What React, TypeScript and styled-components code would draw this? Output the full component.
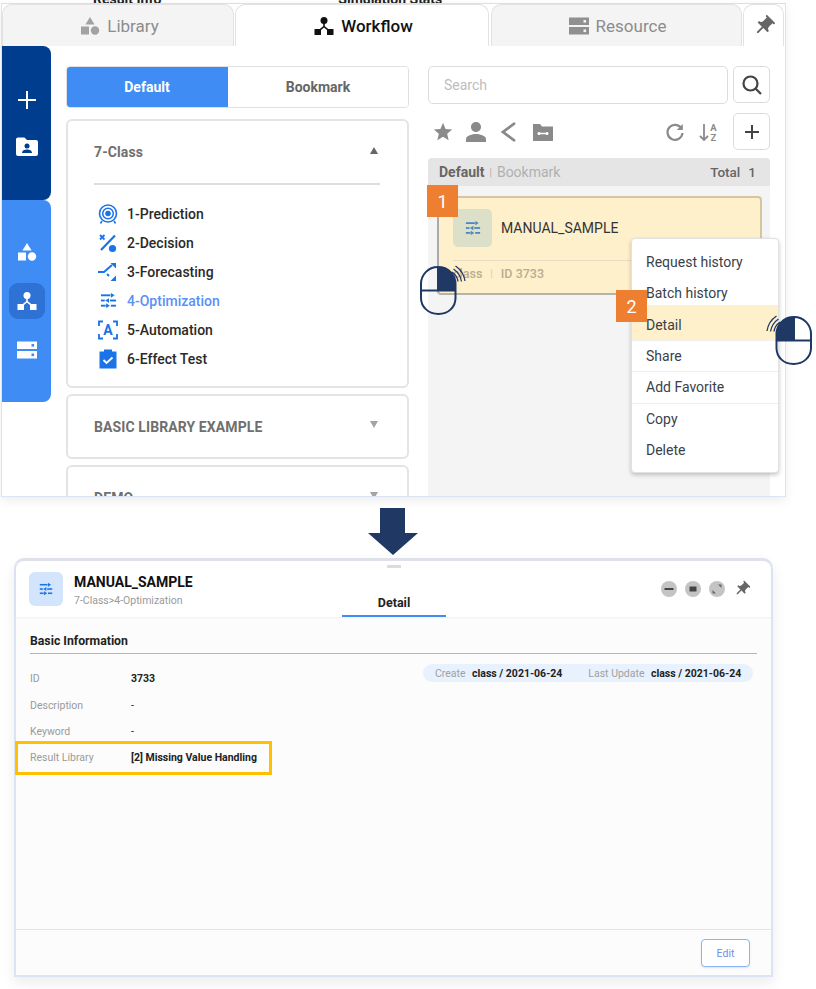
/*
  Workflow list and detail panel guide.
*/

import React from 'react'
import styled, { createGlobalStyle } from 'styled-components'

const GlobalStyle = createGlobalStyle`
  html, body {
    margin: 0;
    padding: 0;
    background: #fff;
    font-family: Roboto, "Liberation Sans", sans-serif;
  }
  * { box-sizing: border-box; }
`

const BLUE = '#3f8cf5'
const NAVY = '#1f3864'
const ICON_BLUE = '#1a73e8'
const GRAY = '#8a8a8a'

/* ---------- icons ---------- */

type IconProps = { size?: number; color?: string }

const PinIcon = ({ size = 24, color = '#555' }: IconProps) => (
  <svg width={size} height={size} viewBox="0 0 24 24" fill={color} style={{ transform: 'rotate(45deg)' }}>
    <path d="M16 9V4h1c.55 0 1-.45 1-1s-.45-1-1-1H7c-.55 0-1 .45-1 1s.45 1 1 1h1v5c0 1.66-1.34 3-3 3v2h5.97v7l1 1 1-1v-7H19v-2c-1.66 0-3-1.34-3-3z" />
  </svg>
)

const ShapesIcon = ({ size = 20, color = '#fff' }: IconProps) => (
  <svg width={size} height={size} viewBox="0 0 20 20" fill={color}>
    <path d="M10 1l4.6 7.4H5.4z" />
    <rect x="1" y="10.5" width="8" height="8" />
    <circle cx="15" cy="14.5" r="4.2" />
  </svg>
)

const FlowIcon = ({ size = 20, color = '#fff' }: IconProps) => (
  <svg width={size} height={size} viewBox="0 0 20 20" fill={color}>
    <circle cx="10" cy="4.5" r="3.5" />
    <path d="M9.2 6h1.6v4.2l5 4-1 1.2-4.800-3.900-4.800 3.900-1-1.200 5-4z" />
    <rect x="0.5" y="13" width="6.5" height="6" />
    <rect x="13" y="13" width="6.5" height="6" />
  </svg>
)

const ServerIcon = ({ size = 20, color = '#fff', hole = BLUE }: IconProps & { hole?: string }) => (
  <svg width={size} height={size} viewBox="0 0 20 20" fill={color}>
    <rect x="0" y="1.5" width="20" height="7.5" />
    <rect x="0" y="11" width="20" height="7.5" />
    <rect x="14.5" y="4" width="2.6" height="2.6" fill={hole} />
    <rect x="14.5" y="13.5" width="2.6" height="2.6" fill={hole} />
  </svg>
)

const TuneIcon = ({ size = 18, color = ICON_BLUE }: IconProps) => (
  <svg width={size} height={size} viewBox="0 0 18 18" fill={color}>
    <rect x="1" y="2.5" width="10" height="2" />
    <path d="M11.5 1v5l4-2.5z" />
    <rect x="1" y="8" width="4" height="2" />
    <path d="M9.5 6.500v5l-4-2.500z" />
    <rect x="10.5" y="8" width="6.5" height="2" />
    <rect x="1" y="13.5" width="5" height="2" />
    <path d="M6.5 12v5l4-2.500z" />
    <rect x="11.5" y="13.5" width="5.5" height="2" />
  </svg>
)

const TargetIcon = () => (
  <svg width="20" height="20" viewBox="0 0 20 20" fill="none" stroke={ICON_BLUE}>
    <circle cx="10" cy="9.5" r="8.5" strokeWidth="1.6" />
    <circle cx="10" cy="9.5" r="5.3" strokeWidth="1.5" />
    <circle cx="10" cy="9.5" r="2.4" fill={ICON_BLUE} />
    <path d="M4 17l-1.500 2.500M16 17l1.500 2.500" strokeWidth="1.5" />
  </svg>
)

const DecisionIcon = () => (
  <svg width="20" height="20" viewBox="0 0 20 20" fill={ICON_BLUE}>
    <path d="M2 2l4.500 4.500M6.500 2L2 6.500" stroke={ICON_BLUE} strokeWidth="1.8" />
    <path d="M17 2.500L3 17" stroke={ICON_BLUE} strokeWidth="2.2" />
    <circle cx="14.5" cy="15.5" r="3.6" />
  </svg>
)

const ForecastIcon = () => (
  <svg width="20" height="20" viewBox="0 0 20 20" fill="none" stroke={ICON_BLUE} strokeWidth="2">
    <path d="M0 10h6l8-7" />
    <path d="M12.5 1H18v5.500z" fill={ICON_BLUE} stroke="none" />
    <path d="M9 12l2 2" />
    <path d="M12.5 19H18v-5.500z" fill={ICON_BLUE} stroke="none" />
  </svg>
)

const AutomationIcon = () => (
  <svg width="20" height="20" viewBox="0 0 20 20" fill="none" stroke={ICON_BLUE} strokeWidth="1.8">
    <path d="M1 6V1.500h4M15 1.500h4V6M1 14v4.500h4M15 18.500h4V14" />
    <text x="10" y="15" textAnchor="middle" fontFamily="Roboto, sans-serif" fontSize="14" fontWeight="700" fill={ICON_BLUE} stroke="none">
      A
    </text>
  </svg>
)

const ClipboardIcon = () => (
  <svg width="20" height="20" viewBox="0 0 20 20">
    <path d="M1.500 2.500h4.500V0.500h8v2h4.500V19.500h-17z" fill={ICON_BLUE} />
    <path d="M5.500 11l3 3 6-5.500" fill="none" stroke="#fff" strokeWidth="1.9" />
  </svg>
)

const MouseIcon = ({ side }: { side: 'left' | 'right' }) => (
  <svg width="46" height="52" viewBox="0 0 46 52" fill="none" style={side === 'left' ? { transform: 'scaleX(-1)' } : undefined}>
    <path d="M10.500 21c0-9 7-17 17.500-17 10 0 17 8 17 17v14c0 9-7.500 16-17.500 16s-17-7-17-16z" stroke={NAVY} strokeWidth="2" fill="none" />
    <path d="M10.500 21c0-9 7-17 17.500-17v23H10.500z" fill={NAVY} />
    <path d="M10.500 27.500h34.500M28 4v23.500" stroke={NAVY} strokeWidth="2" />
    <path d="M1 18C2 11 6 6 10.500 3" stroke={NAVY} strokeWidth="1.3" />
    <path d="M4.500 18.500C5.500 13 8 9 12.500 6" stroke={NAVY} strokeWidth="1.3" />
    <path d="M8 18.500C8.500 15 10.500 11.500 14 9" stroke={NAVY} strokeWidth="1.3" />
  </svg>
)

/* ---------- page ---------- */

const Page = styled.div`
  width: 816px;
  height: 989px;
  overflow: hidden;
  background: #fff;
  display: flex;
  flex-direction: column;
`

const TopStrip = styled.div`
  height: 3px;
  overflow: hidden;
  display: flex;
  align-items: flex-end;
  font-size: 14px;
  font-weight: 700;
  color: #222;
  line-height: 14px;
  white-space: nowrap;
`

const StripText = styled.span<{ $left: number }>`
  margin-left: ${(p) => p.$left}px;
  transform: translateY(3px);
`

const ListWindow = styled.div`
  margin-left: 1px;
  width: 785px;
  height: 494px;
  flex: none;
  border: 1px solid #dbe3f5;
  border-top-color: #d5def3;
  background: #fff;
  box-shadow: 0 4px 10px rgba(0, 0, 0, 0.07);
  overflow: hidden;
  position: relative;
`

const TabBar = styled.div`
  display: flex;
  height: 42px;
`

const Tab = styled.div<{ $active?: boolean; $w: number; $mr?: number; $pl?: number }>`
  width: ${(p) => p.$w}px;
  margin-right: ${(p) => p.$mr ?? 0}px;
  padding-left: ${(p) => p.$pl ?? 0}px;
  background: ${(p) => (p.$active ? '#fff' : '#f4f4f4')};
  border: 1px solid #e2e2e2;
  border-bottom: 0;
  border-radius: 10px 10px 0 0;
  display: flex;
  align-items: center;
  justify-content: center;
  gap: 7px;
  font-size: 17px;
  font-weight: ${(p) => (p.$active ? 500 : 400)};
  color: ${(p) => (p.$active ? '#111' : '#8c8c8c')};
`

const ListBody = styled.div`
  display: flex;
  height: 450px;
`

const Sidebar = styled.div`
  width: 49px;
  flex: none;
  display: flex;
  flex-direction: column;
`

const SideGroup = styled.div<{ $h: number; $dark?: boolean; $pt: number; $gap: number }>`
  height: ${(p) => p.$h}px;
  padding-top: ${(p) => p.$pt}px;
  background: ${(p) => (p.$dark ? '#003d8f' : BLUE)};
  border-radius: 0 8px 8px 0;
  display: flex;
  flex-direction: column;
  align-items: center;
  gap: ${(p) => p.$gap}px;
`

const SideButton = styled.div<{ $active?: boolean }>`
  width: 36px;
  height: 36px;
  border-radius: 9px;
  display: flex;
  align-items: center;
  justify-content: center;
  background: ${(p) => (p.$active ? '#2f72d6' : 'transparent')};
  & + & {
    margin-top: 13px;
  }
`

const LeftColumn = styled.div`
  width: 343px;
  margin-left: 15px;
  padding-top: 20px;
  flex: none;
  display: flex;
  flex-direction: column;
`

const Toggle = styled.div`
  height: 42px;
  display: flex;
  border: 1px solid #e0e0e0;
  border-radius: 4px;
  overflow: hidden;
  margin-bottom: 11px;
  flex: none;
`

const ToggleItem = styled.div<{ $active?: boolean }>`
  flex: ${(p) => (p.$active ? '0 0 162px' : '1')};
  margin: ${(p) => (p.$active ? '-1px 0 -1px -1px' : '0')};
  background: ${(p) => (p.$active ? BLUE : '#fff')};
  color: ${(p) => (p.$active ? '#fff' : '#666')};
  font-size: 14px;
  font-weight: 700;
  display: flex;
  align-items: center;
  justify-content: center;
`

const Accordion = styled.div<{ $h: number }>`
  height: ${(p) => p.$h}px;
  flex: none;
  border: 2px solid #e4e4e4;
  border-radius: 6px;
  margin-bottom: 6px;
  padding: 0 27px 0 26px;
`

const AccordionHead = styled.div<{ $h: number; $line?: boolean }>`
  height: ${(p) => p.$h}px;
  display: flex;
  align-items: center;
  justify-content: space-between;
  font-size: 14px;
  font-weight: 700;
  letter-spacing: 0.1px;
  color: #6f6f6f;
  border-bottom: ${(p) => (p.$line ? '2px solid #dedede' : '0')};
  padding-right: 2px;
`

const Caret = styled.span<{ $up?: boolean }>`
  width: 0;
  height: 0;
  border-left: 4.5px solid transparent;
  border-right: 4.5px solid transparent;
  ${(p) => (p.$up ? 'border-bottom: 7px solid #666;' : 'border-top: 7px solid #a4a4a4;')}
  transform: translateY(-2px);
`

const ClassList = styled.ul`
  list-style: none;
  margin: 14px 0 0;
  padding: 0 0 0 4px;
`

const ClassItem = styled.li<{ $active?: boolean }>`
  height: 29px;
  display: flex;
  align-items: center;
  gap: 9px;
  font-size: 14px;
  font-weight: 500;
  color: ${(p) => (p.$active ? '#5a90f7' : '#2a2a2a')};
`

const IconSlot = styled.span`
  width: 20px;
  height: 20px;
  flex: none;
  display: flex;
  align-items: center;
  justify-content: center;
`

const RightColumn = styled.div`
  width: 342px;
  margin-left: 19px;
  padding-top: 20px;
  flex: none;
  display: flex;
  flex-direction: column;
  position: relative;
`

const SearchRow = styled.div`
  display: flex;
  gap: 5px;
  height: 38px;
  flex: none;
`

const SearchBox = styled.div`
  width: 300px;
  border: 1px solid #dcdcdc;
  border-radius: 5px;
  padding-left: 15px;
  display: flex;
  align-items: center;
  font-size: 14px;
  color: #bdbdbd;
`

const SquareButton = styled.div`
  width: 37px;
  height: 37px;
  border: 1px solid #dcdcdc;
  border-radius: 5px;
  display: flex;
  align-items: center;
  justify-content: center;
  color: #444;
`

const ToolRow = styled.div`
  height: 37px;
  margin: 9px 0 8px;
  display: flex;
  align-items: center;
  padding-left: 4px;
  flex: none;
`

const ToolIcon = styled.span<{ $gap?: number }>`
  display: flex;
  margin-right: ${(p) => p.$gap ?? 9}px;
`

const ToolSpacer = styled.div`
  flex: 1;
`

const ListPanel = styled.div`
  flex: 1;
  background: #f4f4f4;
  border-radius: 4px 4px 0 0;
`

const ListHead = styled.div`
  height: 28px;
  background: #e5e5e5;
  border-radius: 4px 4px 0 0;
  padding: 0 14px 0 11px;
  display: flex;
  align-items: center;
  font-size: 14px;
  color: #b0b0b0;
`

const HeadBold = styled.b`
  color: #666;
  font-weight: 700;
`

const HeadSep = styled.span`
  margin: 0 5px;
  font-size: 10px;
`

const HeadTotal = styled.span`
  margin-left: auto;
  color: #666;
  font-size: 13.5px;
  font-weight: 500;
  display: flex;
  gap: 8px;
`

const WorkCard = styled.div`
  margin: 10px 8px 0 9px;
  height: 99px;
  background: #fff0cc;
  border: 2px solid #d5c69f;
  border-left-color: #aaa;
  border-bottom-color: #b5b3aa;
  border-radius: 4px;
  padding: 11px 14px 0 14px;
`

const CardTop = styled.div`
  height: 52px;
  display: flex;
  gap: 9px;
  align-items: flex-start;
  border-bottom: 1px solid #e6dcc0;
`

const CardIcon = styled.div`
  width: 39px;
  height: 38px;
  border-radius: 5px;
  background: #dce0c8;
  display: flex;
  align-items: center;
  justify-content: center;
`

const CardTitle = styled.div`
  font-size: 14px;
  color: #333;
  line-height: 38px;
`

const CardMeta = styled.div`
  display: flex;
  align-items: center;
  height: 24px;
  font-size: 12.5px;
  font-weight: 500;
  color: #b8ad8e;
`

const MetaSep = styled.span`
  margin: 0 8px;
  font-size: 10px;
  color: #dccfae;
`

const Badge = styled.div<{ $x: number; $y: number }>`
  position: absolute;
  left: ${(p) => p.$x}px;
  top: ${(p) => p.$y}px;
  width: 31px;
  height: 32px;
  background: #ee7f31;
  color: #fff;
  font-size: 18px;
  display: flex;
  align-items: center;
  justify-content: center;
  z-index: 5;
`

const MouseMark = styled.div<{ $x: number; $y: number }>`
  position: absolute;
  left: ${(p) => p.$x}px;
  top: ${(p) => p.$y}px;
  display: flex;
  z-index: 6;
`

const ContextMenu = styled.div`
  position: absolute;
  left: 629px;
  top: 234px;
  width: 148px;
  height: 235px;
  background: #fff;
  border: 1px solid #e2e2e2;
  border-radius: 4px;
  box-shadow: 0 2px 4px rgba(0, 0, 0, 0.22);
  padding-top: 7px;
  z-index: 4;
`

const MenuItem = styled.div<{ $active?: boolean; $line?: boolean }>`
  height: ${(p) => (p.$active ? 36 : 31.3)}px;
  margin-top: ${(p) => (p.$active ? -3.7 : 0)}px;
  padding: ${(p) => (p.$active ? '4.5px' : '0')} 0 0 14px;
  display: flex;
  align-items: center;
  font-size: 14px;
  color: #3a3f4a;
  background: ${(p) => (p.$active ? '#fff0cc' : 'transparent')};
  border-bottom: ${(p) => (p.$line ? '1px solid #eeeeee' : '0')};
`

const ArrowWrap = styled.div`
  height: 61px;
  padding-top: 11px;
  padding-left: 368px;
  flex: none;
  display: flex;
  align-items: flex-start;
`

/* ---------- detail window ---------- */

const DetailWindow = styled.div`
  margin-left: 14px;
  width: 759px;
  height: 419px;
  flex: none;
  border: 2px solid #dbe3f5;
  border-top: 3px solid #dfe1ea;
  border-radius: 10px 10px 0 0;
  background: #fcfcfc;
  box-shadow: 0 6px 14px rgba(0, 0, 0, 0.08);
  display: flex;
  flex-direction: column;
  position: relative;
`

const DetailHead = styled.div`
  height: 56px;
  flex: none;
  background: #fff;
  border-radius: 9px 9px 0 0;
  box-shadow: 0 1px 2px rgba(0, 0, 0, 0.05);
  display: grid;
  grid-template-columns: 313px 104px 1fr;
  padding-left: 13px;
  position: relative;
`

const Handle = styled.div`
  position: absolute;
  left: 371px;
  top: 4px;
  width: 14px;
  height: 3px;
  background: #dcdcdc;
`

const HeadInfo = styled.div`
  display: flex;
  gap: 11px;
  padding-top: 11px;
`

const HeadIcon = styled.div`
  width: 34px;
  height: 34px;
  border-radius: 6px;
  background: #d3e5fc;
  display: flex;
  align-items: center;
  justify-content: center;
`

const HeadTitle = styled.div`
  font-size: 14px;
  font-weight: 700;
  color: #111;
  line-height: 17px;
  margin-top: 2px;
`

const HeadPath = styled.div`
  font-size: 10.5px;
  color: #999;
  line-height: 12px;
  margin-top: 4px;
`

const DetailTab = styled.div`
  border-bottom: 2px solid ${BLUE};
  font-size: 12.5px;
  font-weight: 700;
  color: #222;
  display: flex;
  align-items: flex-end;
  justify-content: center;
  padding-bottom: 5px;
`

const WindowControls = styled.div`
  display: flex;
  align-items: center;
  justify-content: flex-end;
  gap: 8px;
  padding-right: 20px;
  height: 56px;
`

const RoundControl = styled.div`
  width: 16px;
  height: 16px;
  border-radius: 50%;
  background: #c4c4c4;
  display: flex;
  align-items: center;
  justify-content: center;
`

const DetailMain = styled.div`
  flex: 1;
  padding: 15px 14px 0 14px;
`

const SectionTitle = styled.div`
  font-size: 12.25px;
  font-weight: 700;
  color: #222;
  height: 22px;
  line-height: 18px;
  border-bottom: 1px solid #b5b5b5;
`

const InfoGrid = styled.div`
  position: relative;
  margin-top: 11px;
`

const InfoRow = styled.div`
  height: 26px;
  display: grid;
  grid-template-columns: 101px 1fr;
  align-items: center;
  font-size: 10.5px;
  position: relative;
  &:nth-child(2) {
    height: 27px;
  }
`

const InfoLabel = styled.span`
  color: #9a9a9a;
`

const InfoValue = styled.span<{ $plain?: boolean }>`
  color: #222;
  font-weight: ${(p) => (p.$plain ? 400 : 700)};
`

const Highlight = styled.div`
  position: absolute;
  left: -15px;
  top: -3px;
  width: 257px;
  height: 34px;
  border: 3px solid #ffc000;
`

const StampPill = styled.div`
  position: absolute;
  right: 4px;
  top: -1px;
  width: 330px;
  height: 18px;
  border-radius: 9px;
  background: #e8f2fe;
  display: flex;
  align-items: center;
  padding-left: 12px;
  font-size: 10.5px;
`

const StampLabel = styled.span<{ $gap?: number }>`
  color: #a0a0a0;
  margin-left: ${(p) => p.$gap ?? 0}px;
  margin-right: 6.5px;
`

const StampValue = styled.span`
  color: #222;
  font-weight: 700;
`

const DetailFoot = styled.div`
  height: 46px;
  flex: none;
  border-top: 1px solid #e4e4e4;
  display: flex;
  justify-content: flex-end;
  padding: 9px 21px 0 0;
`

const EditButton = styled.div`
  width: 49px;
  height: 28px;
  background: #fff;
  border: 1.5px solid #8ab6f8;
  border-radius: 4px;
  box-shadow: 0 1px 2px rgba(0, 0, 0, 0.1);
  display: flex;
  align-items: center;
  justify-content: center;
  font-size: 10.5px;
  color: #6f8fe8;
`

const classes = [
  { label: '1-Prediction', icon: <TargetIcon /> },
  { label: '2-Decision', icon: <DecisionIcon /> },
  { label: '3-Forecasting', icon: <ForecastIcon /> },
  { label: '4-Optimization', icon: <TuneIcon size={17} />, active: true },
  { label: '5-Automation', icon: <AutomationIcon /> },
  { label: '6-Effect Test', icon: <ClipboardIcon /> },
]

const menu = [
  { label: 'Request history' },
  { label: 'Batch history' },
  { label: 'Detail', active: true, line: true },
  { label: 'Share', line: true },
  { label: 'Add Favorite', line: true },
  { label: 'Copy' },
  { label: 'Delete' },
]

const App: React.FC = () => (
  <Page>
    <GlobalStyle />
    <TopStrip>
      <StripText $left={93}>Result Info</StripText>
      <StripText $left={177}>Simulation Stats</StripText>
    </TopStrip>

    <ListWindow>
      <TabBar>
        <Tab $w={232} $mr={1} $pl={3}>
          <ShapesIcon size={20} color="#a2a2a2" />
          Library
        </Tab>
        <Tab $w={254} $mr={2} $pl={3} $active>
          <FlowIcon size={20} color="#111" />
          Workflow
        </Tab>
        <Tab $w={251} $mr={1} $pl={2}>
          <ServerIcon size={20} color="#909090" hole="#f4f4f4" />
          Resource
        </Tab>
        <Tab $w={41} $active>
          <PinIcon size={24} color="#666" />
        </Tab>
      </TabBar>

      <ListBody>
        <Sidebar>
          <SideGroup $h={154} $dark $pt={43} $gap={25}>
            <svg width="22" height="22" viewBox="0 0 22 22" stroke="#fff" strokeWidth="2">
              <path d="M11 2v18M2 11h18" />
            </svg>
            <svg width="26" height="22" viewBox="0 0 26 22">
              <path d="M2 3.500c0-1.100.9-2 2-2h6.500l2.500 2.500h9c1.100 0 2 .9 2 2v12c0 1.100-.9 2-2 2H4c-1.100 0-2-.9-2-2z" fill="#fff" />
              <circle cx="13" cy="10" r="2.5" fill="#003d8f" />
              <path d="M8 17c0-2.500 2.500-3.500 5-3.500s5 1 5 3.500z" fill="#003d8f" />
            </svg>
          </SideGroup>
          <SideGroup $h={202} $pt={34} $gap={0}>
            <SideButton>
              <ShapesIcon size={20} />
            </SideButton>
            <SideButton $active>
              <FlowIcon size={20} />
            </SideButton>
            <SideButton>
              <ServerIcon size={20} />
            </SideButton>
          </SideGroup>
        </Sidebar>

        <LeftColumn>
          <Toggle>
            <ToggleItem $active>Default</ToggleItem>
            <ToggleItem>Bookmark</ToggleItem>
          </Toggle>

          <Accordion $h={269}>
            <AccordionHead $h={64} $line>
              7-Class
              <Caret $up />
            </AccordionHead>
            <ClassList>
              {classes.map((item) => (
                <ClassItem key={item.label} $active={item.active}>
                  <IconSlot>{item.icon}</IconSlot>
                  {item.label}
                </ClassItem>
              ))}
            </ClassList>
          </Accordion>

          <Accordion $h={65}>
            <AccordionHead $h={61}>
              BASIC LIBRARY EXAMPLE
              <Caret />
            </AccordionHead>
          </Accordion>

          <Accordion $h={65}>
            <AccordionHead $h={61}>
              DEMO
              <Caret />
            </AccordionHead>
          </Accordion>
        </LeftColumn>

        <RightColumn>
          <SearchRow>
            <SearchBox>Search</SearchBox>
            <SquareButton>
              <svg width="24" height="24" viewBox="0 0 24 24" fill="none" stroke="#444" strokeWidth="2.2">
                <circle cx="10.5" cy="10.5" r="7" />
                <path d="M15.500 15.500L21 21" />
              </svg>
            </SquareButton>
          </SearchRow>

          <ToolRow>
            <ToolIcon $gap={10}>
              <svg width="22" height="22" viewBox="0 0 24 24" fill={GRAY}>
                <path d="M12 17.270L18.180 21l-1.640-7.030L22 9.240l-7.190-.61L12 2 9.190 8.630 2 9.240l5.460 4.730L5.820 21z" />
              </svg>
            </ToolIcon>
            <ToolIcon $gap={11}>
              <svg width="24" height="24" viewBox="0 0 24 24" fill={GRAY}>
                <path d="M12 12c2.760 0 5-2.240 5-5s-2.240-5-5-5-5 2.240-5 5 2.240 5 5 5zm0 2c-3.340 0-10 1.670-10 5v3h20v-3c0-3.330-6.660-5-10-5z" />
              </svg>
            </ToolIcon>
            <ToolIcon $gap={13}>
              <svg width="20" height="24" viewBox="0 0 20 24" fill="none" stroke={GRAY} strokeWidth="2.8">
                <path d="M16 3L4 12l12 9" />
              </svg>
            </ToolIcon>
            <ToolIcon>
              <svg width="22" height="22" viewBox="0 0 22 22">
                <path d="M1 3h7l2 2.500h11V20H1z" fill={GRAY} />
                <path d="M6 12.500h10" stroke="#fff" strokeWidth="1.5" />
                <circle cx="7" cy="12.5" r="1.5" fill="#fff" />
                <circle cx="15" cy="12.5" r="1.5" fill="#fff" />
              </svg>
            </ToolIcon>
            <ToolSpacer />
            <ToolIcon $gap={14}>
              <svg width="20" height="20" viewBox="0 0 20 20" fill="none" stroke={GRAY} strokeWidth="2.2">
                <path d="M16.500 6.500A7.500 7.500 0 1 0 17.500 11" />
                <path d="M17.800 2v6h-6z" fill={GRAY} stroke="none" />
              </svg>
            </ToolIcon>
            <ToolIcon $gap={14}>
              <svg width="20" height="24" viewBox="0 0 20 24" fill="none" stroke={GRAY} strokeWidth="1.8">
                <path d="M5 4v16M1 16l4 4 4-4" />
                <text x="14.5" y="10.5" textAnchor="middle" fontFamily="Roboto, sans-serif" fontSize="9.5" fontWeight="700" fill={GRAY} stroke="none">
                  A
                </text>
                <text x="14.5" y="21" textAnchor="middle" fontFamily="Roboto, sans-serif" fontSize="9.5" fontWeight="700" fill={GRAY} stroke="none">
                  Z
                </text>
              </svg>
            </ToolIcon>
            <SquareButton>
              <svg width="18" height="18" viewBox="0 0 18 18" stroke="#444" strokeWidth="2">
                <path d="M9 2v14M2 9h14" />
              </svg>
            </SquareButton>
          </ToolRow>

          <ListPanel>
            <ListHead>
              <HeadBold>Default</HeadBold>
              <HeadSep>|</HeadSep>
              Bookmark
              <HeadTotal>
                <span>Total</span>
                <span>1</span>
              </HeadTotal>
            </ListHead>
            <WorkCard>
              <CardTop>
                <CardIcon>
                  <TuneIcon size={16} color="#4a86c8" />
                </CardIcon>
                <CardTitle>MANUAL_SAMPLE</CardTitle>
              </CardTop>
              <CardMeta>
                class
                <MetaSep>|</MetaSep>
                ID 3733
              </CardMeta>
            </WorkCard>
          </ListPanel>
        </RightColumn>

        <ContextMenu>
          {menu.map((item) => (
            <MenuItem key={item.label} $active={item.active} $line={item.line}>
              {item.label}
            </MenuItem>
          ))}
        </ContextMenu>
      </ListBody>

      <Badge $x={425} $y={181}>
        1
      </Badge>
      <Badge $x={614} $y={286}>
        2
      </Badge>
      <MouseMark $x={418} $y={259}>
        <MouseIcon side="left" />
      </MouseMark>
    </ListWindow>

    <ArrowWrap>
      <svg width="50" height="47" viewBox="0 0 50 47" fill={NAVY}>
        <path d="M12 0h25v25h13L25 47 0 25h12z" />
      </svg>
    </ArrowWrap>

    <DetailWindow>
      <DetailHead>
        <Handle />
        <HeadInfo>
          <HeadIcon>
            <TuneIcon size={14} />
          </HeadIcon>
          <div>
            <HeadTitle>MANUAL_SAMPLE</HeadTitle>
            <HeadPath>7-Class&gt;4-Optimization</HeadPath>
          </div>
        </HeadInfo>
        <DetailTab>Detail</DetailTab>
        <WindowControls>
          <RoundControl>
            <svg width="10" height="10" viewBox="0 0 10 10">
              <rect x="0.5" y="4" width="9" height="2" fill="#444" />
            </svg>
          </RoundControl>
          <RoundControl>
            <svg width="10" height="10" viewBox="0 0 10 10">
              <rect x="1.5" y="2.5" width="7" height="5" fill="#444" />
            </svg>
          </RoundControl>
          <RoundControl>
            <svg width="10" height="10" viewBox="0 0 10 10" fill="#666">
              <path d="M6 0.500h3.500V4zM0.500 6V9.500H4z" />
            </svg>
          </RoundControl>
          <PinIcon size={18} color="#666" />
        </WindowControls>
      </DetailHead>

      <DetailMain>
        <SectionTitle>Basic Information</SectionTitle>
        <InfoGrid>
          <StampPill>
            <StampLabel>Create</StampLabel>
            <StampValue>class / 2021-06-24</StampValue>
            <StampLabel $gap={26}>Last Update</StampLabel>
            <StampValue>class / 2021-06-24</StampValue>
          </StampPill>
          <InfoRow>
            <InfoLabel>ID</InfoLabel>
            <InfoValue>3733</InfoValue>
          </InfoRow>
          <InfoRow>
            <InfoLabel>Description</InfoLabel>
            <InfoValue $plain>-</InfoValue>
          </InfoRow>
          <InfoRow>
            <InfoLabel>Keyword</InfoLabel>
            <InfoValue $plain>-</InfoValue>
          </InfoRow>
          <InfoRow>
            <InfoLabel>Result Library</InfoLabel>
            <InfoValue>[2] Missing Value Handling</InfoValue>
            <Highlight />
          </InfoRow>
        </InfoGrid>
      </DetailMain>

      <DetailFoot>
        <EditButton>Edit</EditButton>
      </DetailFoot>
    </DetailWindow>

    <MouseMark $x={766} $y={313}>
      <MouseIcon side="right" />
    </MouseMark>
  </Page>
)

export default App
